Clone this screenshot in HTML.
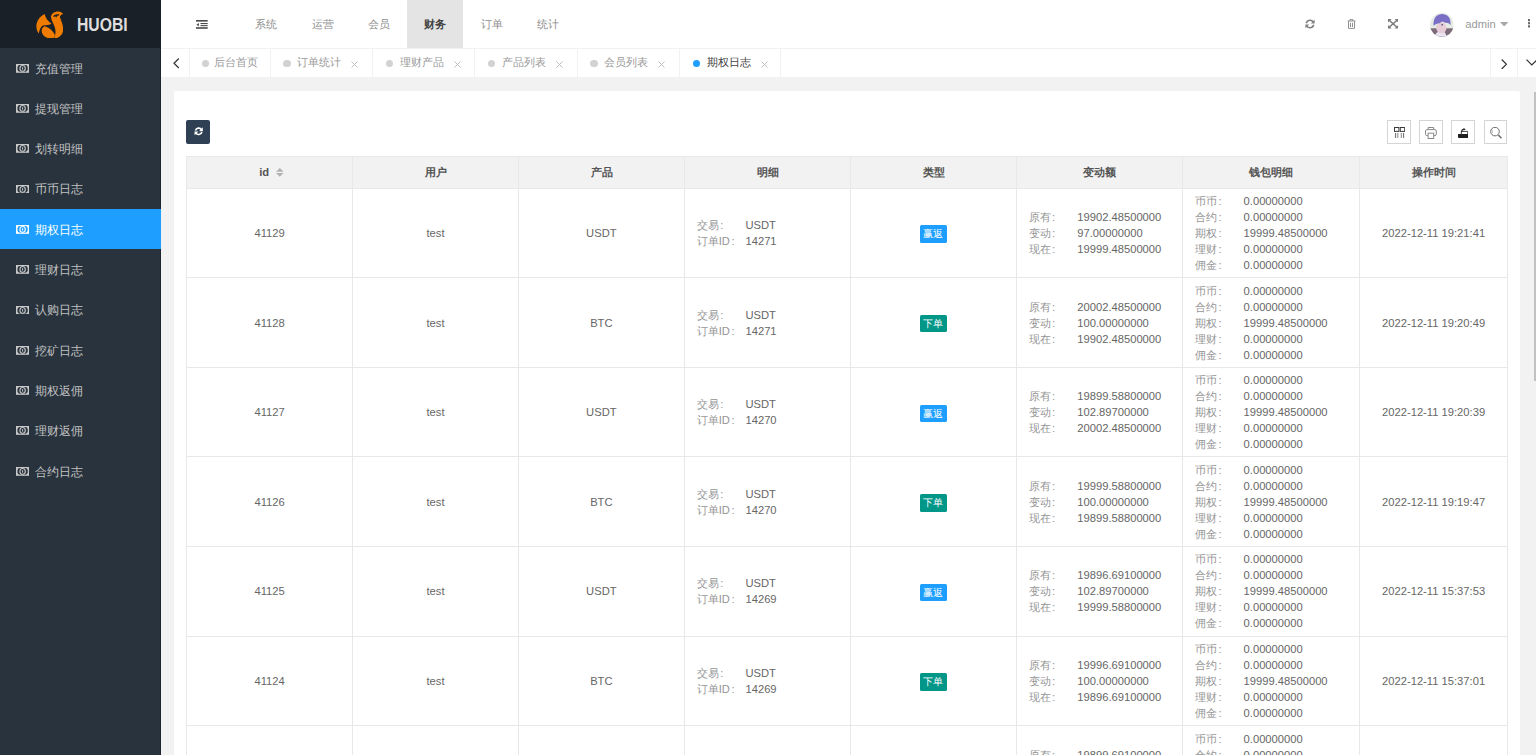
<!DOCTYPE html><html><head><meta charset="utf-8"><title>期权日志</title><style>
*{box-sizing:border-box;margin:0;padding:0}
html,body{width:1536px;height:755px;overflow:hidden}
body{position:relative;background:#f2f2f2;font-family:"Liberation Sans",sans-serif;font-size:11.2px;color:#666}
.abs{position:absolute}
#side{position:absolute;left:0;top:0;width:160.8px;height:755px;background:#28333e;box-shadow:inset -1px 0 0 #1d2630}
#logo{position:absolute;left:0;top:0;width:160.8px;height:48px;background:#192027}
#logo .t{position:absolute;left:76.6px;top:14.6px;font-size:17.8px;line-height:20px;font-weight:bold;color:#dedede;transform:scaleX(0.885);transform-origin:0 0}
.mi{position:absolute;left:0;width:160.8px;height:40.3px;color:#c2c2c2;font-size:11.5px}
.mi.on{background:#1e9fff;color:#fff}
.mi .ic{position:absolute;left:15.5px;top:15.8px;width:13.2px;height:8.8px}
.mi .tx{position:absolute;left:35.3px;top:12.6px;line-height:16px;white-space:nowrap}
#header{position:absolute;left:160.8px;top:0;width:1375.2px;height:48px;background:#fff}
.nv{position:absolute;top:0;height:48px;line-height:48px;width:56.3px;text-align:center;color:#8e8e8e;font-size:11.2px}
.nv.on{background:#e4e4e4;color:#444;font-weight:bold}
#tabs{position:absolute;left:160.8px;top:48px;width:1375.2px;height:29px;background:#fff;border-top:1px solid #f2f2f2}
.tb{position:absolute;top:0;height:28px;border-right:1px solid #f2f2f2;color:#999;white-space:nowrap}
.tb .dot{position:absolute;top:10.6px;width:7.4px;height:7.4px;border-radius:50%;background:#d2d2d2}
.tb .tx{position:absolute;top:5.3px;line-height:16px}
.tb .x{position:absolute;top:11.8px}
#card{position:absolute;left:173.7px;top:90.9px;width:1346.3px;height:700px;background:#fff;border-radius:2px}
#tbl{position:absolute;left:0;top:0}
.hline{position:absolute;height:1px;background:#e8e8e8}
.vline{position:absolute;width:1px;background:#e8e8e8}
.th{position:absolute;top:156px;text-indent:1px;height:32.6px;line-height:32.6px;text-align:center;font-weight:bold;color:#555}
.cc{position:absolute;text-align:center;color:#666}
.kv{position:absolute;line-height:16px;color:#666;white-space:nowrap}
.kv .k{display:inline-block;width:48.8px;color:#959595}
.co{font-style:normal;margin-left:1.6px}
.badge{position:absolute;height:17.5px;line-height:17.5px;padding:0 3.6px;font-size:9.6px;color:#fff;border-radius:1.6px}
.tool{position:absolute;top:120.2px;width:23.8px;height:23.4px;border:1px solid #d4d4d4}
</style></head><body>
<div id="side"><div id="logo"><svg class="abs" style="left:35.7px;top:10.8px" width="27.2" height="27.6" viewBox="120 100 570 580"><g fill="#ef7b00">
<path d="M300 165 C318 235 362 318 445 368 C410 392 330 398 265 405 C225 425 195 480 178 575 C135 520 118 440 132 370 C150 280 215 210 300 165Z"/>
<path d="M302 418 C390 440 472 512 512 592 C530 652 482 688 405 676 C315 665 245 605 238 525 C235 470 260 432 302 418Z"/>
<path d="M432 222 C440 150 515 105 590 110 C640 115 668 140 690 163 C655 172 628 192 622 228 C640 290 690 380 690 480 C698 580 630 660 490 690 C525 630 540 540 520 460 C500 380 440 310 432 222Z"/>
</g><path d="M478 208 C510 180 560 166 610 172 C600 185 592 195 588 205 L568 196 L548 238 L522 212 L500 226 Z" fill="#192027"/></svg><div class="t">HUOBI</div></div>
<div class="mi" style="top:48.00px"><svg class="ic" viewBox="0 0 13.2 8.8"><rect x="0" y="0" width="13.2" height="8.8" fill="#c8c8c8"/><rect x="1.5" y="1.1" width="10.2" height="6.6" rx="2.4" fill="#28333e"/><ellipse cx="6.6" cy="4.4" rx="2.7" ry="2.9" fill="none" stroke="#c8c8c8" stroke-width="1.1"/><rect x="6.1" y="3.2" width="1" height="2.4" fill="#c8c8c8"/></svg><span class="tx">充值管理</span></div>
<div class="mi" style="top:88.30px"><svg class="ic" viewBox="0 0 13.2 8.8"><rect x="0" y="0" width="13.2" height="8.8" fill="#c8c8c8"/><rect x="1.5" y="1.1" width="10.2" height="6.6" rx="2.4" fill="#28333e"/><ellipse cx="6.6" cy="4.4" rx="2.7" ry="2.9" fill="none" stroke="#c8c8c8" stroke-width="1.1"/><rect x="6.1" y="3.2" width="1" height="2.4" fill="#c8c8c8"/></svg><span class="tx">提现管理</span></div>
<div class="mi" style="top:128.60px"><svg class="ic" viewBox="0 0 13.2 8.8"><rect x="0" y="0" width="13.2" height="8.8" fill="#c8c8c8"/><rect x="1.5" y="1.1" width="10.2" height="6.6" rx="2.4" fill="#28333e"/><ellipse cx="6.6" cy="4.4" rx="2.7" ry="2.9" fill="none" stroke="#c8c8c8" stroke-width="1.1"/><rect x="6.1" y="3.2" width="1" height="2.4" fill="#c8c8c8"/></svg><span class="tx">划转明细</span></div>
<div class="mi" style="top:168.90px"><svg class="ic" viewBox="0 0 13.2 8.8"><rect x="0" y="0" width="13.2" height="8.8" fill="#c8c8c8"/><rect x="1.5" y="1.1" width="10.2" height="6.6" rx="2.4" fill="#28333e"/><ellipse cx="6.6" cy="4.4" rx="2.7" ry="2.9" fill="none" stroke="#c8c8c8" stroke-width="1.1"/><rect x="6.1" y="3.2" width="1" height="2.4" fill="#c8c8c8"/></svg><span class="tx">币币日志</span></div>
<div class="mi on" style="top:209.20px"><svg class="ic" viewBox="0 0 13.2 8.8"><rect x="0" y="0" width="13.2" height="8.8" fill="#fff"/><rect x="1.5" y="1.1" width="10.2" height="6.6" rx="2.4" fill="#1e9fff"/><ellipse cx="6.6" cy="4.4" rx="2.7" ry="2.9" fill="none" stroke="#fff" stroke-width="1.1"/><rect x="6.1" y="3.2" width="1" height="2.4" fill="#fff"/></svg><span class="tx">期权日志</span></div>
<div class="mi" style="top:249.50px"><svg class="ic" viewBox="0 0 13.2 8.8"><rect x="0" y="0" width="13.2" height="8.8" fill="#c8c8c8"/><rect x="1.5" y="1.1" width="10.2" height="6.6" rx="2.4" fill="#28333e"/><ellipse cx="6.6" cy="4.4" rx="2.7" ry="2.9" fill="none" stroke="#c8c8c8" stroke-width="1.1"/><rect x="6.1" y="3.2" width="1" height="2.4" fill="#c8c8c8"/></svg><span class="tx">理财日志</span></div>
<div class="mi" style="top:289.80px"><svg class="ic" viewBox="0 0 13.2 8.8"><rect x="0" y="0" width="13.2" height="8.8" fill="#c8c8c8"/><rect x="1.5" y="1.1" width="10.2" height="6.6" rx="2.4" fill="#28333e"/><ellipse cx="6.6" cy="4.4" rx="2.7" ry="2.9" fill="none" stroke="#c8c8c8" stroke-width="1.1"/><rect x="6.1" y="3.2" width="1" height="2.4" fill="#c8c8c8"/></svg><span class="tx">认购日志</span></div>
<div class="mi" style="top:330.10px"><svg class="ic" viewBox="0 0 13.2 8.8"><rect x="0" y="0" width="13.2" height="8.8" fill="#c8c8c8"/><rect x="1.5" y="1.1" width="10.2" height="6.6" rx="2.4" fill="#28333e"/><ellipse cx="6.6" cy="4.4" rx="2.7" ry="2.9" fill="none" stroke="#c8c8c8" stroke-width="1.1"/><rect x="6.1" y="3.2" width="1" height="2.4" fill="#c8c8c8"/></svg><span class="tx">挖矿日志</span></div>
<div class="mi" style="top:370.40px"><svg class="ic" viewBox="0 0 13.2 8.8"><rect x="0" y="0" width="13.2" height="8.8" fill="#c8c8c8"/><rect x="1.5" y="1.1" width="10.2" height="6.6" rx="2.4" fill="#28333e"/><ellipse cx="6.6" cy="4.4" rx="2.7" ry="2.9" fill="none" stroke="#c8c8c8" stroke-width="1.1"/><rect x="6.1" y="3.2" width="1" height="2.4" fill="#c8c8c8"/></svg><span class="tx">期权返佣</span></div>
<div class="mi" style="top:410.70px"><svg class="ic" viewBox="0 0 13.2 8.8"><rect x="0" y="0" width="13.2" height="8.8" fill="#c8c8c8"/><rect x="1.5" y="1.1" width="10.2" height="6.6" rx="2.4" fill="#28333e"/><ellipse cx="6.6" cy="4.4" rx="2.7" ry="2.9" fill="none" stroke="#c8c8c8" stroke-width="1.1"/><rect x="6.1" y="3.2" width="1" height="2.4" fill="#c8c8c8"/></svg><span class="tx">理财返佣</span></div>
<div class="mi" style="top:451.00px"><svg class="ic" viewBox="0 0 13.2 8.8"><rect x="0" y="0" width="13.2" height="8.8" fill="#c8c8c8"/><rect x="1.5" y="1.1" width="10.2" height="6.6" rx="2.4" fill="#28333e"/><ellipse cx="6.6" cy="4.4" rx="2.7" ry="2.9" fill="none" stroke="#c8c8c8" stroke-width="1.1"/><rect x="6.1" y="3.2" width="1" height="2.4" fill="#c8c8c8"/></svg><span class="tx">合约日志</span></div>
</div>
<div id="header">
<svg class="abs" style="left:35.4px;top:20px" width="11.7" height="8.8" viewBox="0 0 11.7 8.8"><g fill="#4a4a4a"><rect x="0" y="0" width="11.7" height="1.6"/><rect x="4.5" y="3" width="7.2" height="1.1"/><rect x="4.5" y="5.1" width="7.2" height="1.1"/><rect x="0" y="7.2" width="11.7" height="1.6"/><path d="M2.9 3 L0.4 4.65 L2.9 6.3Z"/></g></svg>
<div class="nv" style="left:77.50px">系统</div>
<div class="nv" style="left:133.80px">运营</div>
<div class="nv" style="left:190.10px">会员</div>
<div class="nv on" style="left:246.40px">财务</div>
<div class="nv" style="left:302.70px">订单</div>
<div class="nv" style="left:359.00px">统计</div>
<svg class="abs" style="left:1144.0px;top:19px" width="10" height="10" viewBox="0 0 10 10"><g fill="none" stroke="#808080" stroke-width="1.6"><path d="M1.3 4.2 A3.8 3.8 0 0 1 8.3 3.2"/><path d="M8.7 5.8 A3.8 3.8 0 0 1 1.7 6.8"/></g><g fill="#808080"><path d="M9.6 0.8 L9.6 4.6 L5.8 4.6Z"/><path d="M0.4 9.2 L0.4 5.4 L4.2 5.4Z"/></g></svg>
<svg class="abs" style="left:1186.1px;top:19px" width="9" height="10" viewBox="0 0 9 10"><g fill="none" stroke="#909090" stroke-width="1"><path d="M0.5 2 H8.5"/><path d="M3 2 V0.6 H6 V2"/><path d="M1.5 2.2 V9.4 H7.5 V2.2"/><path d="M3.5 3.8 V8"/><path d="M5.5 3.8 V8"/></g></svg>
<svg class="abs" style="left:1226.9px;top:19.3px" width="10.2" height="9.4" viewBox="0 0 10.2 9.4"><g fill="none" stroke="#7a7a7a" stroke-width="1.5"><path d="M1.2 1.2 L9 8.2"/><path d="M9 1.2 L1.2 8.2"/></g><g fill="#7a7a7a"><path d="M0 0 H3.6 L0 3.4Z"/><path d="M10.2 0 H6.6 L10.2 3.4Z"/><path d="M0 9.4 H3.6 L0 6Z"/><path d="M10.2 9.4 H6.6 L10.2 6Z"/></g></svg>
<svg class="abs" style="left:1269.1px;top:12.9px" width="23.7" height="23.7" viewBox="0 0 24 24"><defs><clipPath id="av"><circle cx="12" cy="12" r="12"/></clipPath></defs><g clip-path="url(#av)"><rect width="24" height="24" fill="#e6ece4"/><rect x="0" y="15.5" width="24" height="9" fill="#7d6b7a"/><path d="M4.5 24 C6 19.5 9 18.5 11 18.5 L15 19.5 C16 21 16.5 23 17 24Z" fill="#e9e6f2"/><ellipse cx="11.5" cy="15" rx="5.2" ry="5.6" fill="#e8ccd8"/><path d="M3.6 13 C2.8 4.5 7.5 1 12.2 1 C17.5 1 21.5 4.5 20.8 12.5 C19.5 10.5 17.5 9.8 15.5 10 L12.5 8.5 L9.5 10.5 C7.5 10.5 5.5 11.5 3.6 13Z" fill="#7b6ec6"/><ellipse cx="12.3" cy="11.8" rx="0.8" ry="0.9" fill="#4c4a86"/></g></svg>
<div class="abs" style="left:1304.4px;top:15.5px;line-height:16px;color:#999;font-size:11.2px">admin</div>
<svg class="abs" style="left:1339.6px;top:21.8px" width="8.4" height="4.6" viewBox="0 0 8.4 4.6"><path d="M0 0 H8.4 L4.2 4.6Z" fill="#a8a8a8"/></svg>
<svg class="abs" style="left:1367.2px;top:19.3px" width="2.4" height="8.5" viewBox="0 0 2.4 8.5"><g fill="#6a6a6a"><rect y="0" width="2.4" height="2.2"/><rect y="3.15" width="2.4" height="2.2"/><rect y="6.3" width="2.4" height="2.2"/></g></svg>
</div>
<div id="tabs">
<div class="abs" style="left:0;top:0;width:29.4px;height:28px;border-right:1px solid #f2f2f2"></div>
<svg class="abs" style="left:12.2px;top:9px" width="6.5" height="10.5" viewBox="0 0 6.5 10.5"><path d="M5.8 0.5 L1 5.25 L5.8 10" fill="none" stroke="#333" stroke-width="1.2"/></svg>
<div class="tb" style="left:29.40px;width:80.70px"><span class="dot" style="left:11.7px"></span><span class="tx" style="left:23.4px">后台首页</span></div>
<div class="tb" style="left:110.10px;width:102.40px"><span class="dot" style="left:12.5px;"></span><span class="tx" style="left:26.5px;">订单统计</span><svg class="x" style="left:80.6px" width="7" height="7" viewBox="0 0 7 7"><path d="M0.5 0.5 L6.5 6.5 M6.5 0.5 L0.5 6.5" stroke="#b8b8b8" stroke-width="0.9"/></svg></div>
<div class="tb" style="left:212.50px;width:102.20px"><span class="dot" style="left:12.5px;"></span><span class="tx" style="left:26.5px;">理财产品</span><svg class="x" style="left:80.6px" width="7" height="7" viewBox="0 0 7 7"><path d="M0.5 0.5 L6.5 6.5 M6.5 0.5 L0.5 6.5" stroke="#b8b8b8" stroke-width="0.9"/></svg></div>
<div class="tb" style="left:314.70px;width:102.30px"><span class="dot" style="left:12.5px;"></span><span class="tx" style="left:26.5px;">产品列表</span><svg class="x" style="left:80.6px" width="7" height="7" viewBox="0 0 7 7"><path d="M0.5 0.5 L6.5 6.5 M6.5 0.5 L0.5 6.5" stroke="#b8b8b8" stroke-width="0.9"/></svg></div>
<div class="tb" style="left:417.00px;width:102.50px"><span class="dot" style="left:12.5px;"></span><span class="tx" style="left:26.5px;">会员列表</span><svg class="x" style="left:80.6px" width="7" height="7" viewBox="0 0 7 7"><path d="M0.5 0.5 L6.5 6.5 M6.5 0.5 L0.5 6.5" stroke="#b8b8b8" stroke-width="0.9"/></svg></div>
<div class="tb" style="left:519.50px;width:101.00px"><span class="dot" style="left:12.5px;background:#1e9fff"></span><span class="tx" style="left:26.5px;color:#444">期权日志</span><svg class="x" style="left:80.6px" width="7" height="7" viewBox="0 0 7 7"><path d="M0.5 0.5 L6.5 6.5 M6.5 0.5 L0.5 6.5" stroke="#b8b8b8" stroke-width="0.9"/></svg></div>
<div class="abs" style="left:1328.8px;top:0;width:1px;height:28px;background:#f2f2f2"></div>
<div class="abs" style="left:1356.3px;top:0;width:1px;height:28px;background:#f2f2f2"></div>
<svg class="abs" style="left:1340.0px;top:9.5px" width="6.5" height="10.5" viewBox="0 0 6.5 10.5"><path d="M0.7 0.5 L5.5 5.25 L0.7 10" fill="none" stroke="#333" stroke-width="1.2"/></svg>
<svg class="abs" style="left:1365.7px;top:10.2px" width="12" height="7" viewBox="0 0 12 7"><path d="M0.5 0.7 L5.8 6 L11.1 0.7" fill="none" stroke="#333" stroke-width="1.2"/></svg>
</div>
<div id="card"></div>
<div class="abs" style="left:186px;top:120px;width:24px;height:24px;background:#2f3f54;border-radius:2px"></div>
<svg class="abs" style="left:193.6px;top:127.4px" width="9.4" height="8.6" viewBox="0 0 10 10"><g fill="none" stroke="#fff" stroke-width="1.9"><path d="M1.3 4.2 A3.8 3.8 0 0 1 8.3 3.2"/><path d="M8.7 5.8 A3.8 3.8 0 0 1 1.7 6.8"/></g><g fill="#fff"><path d="M9.8 0.4 L9.8 4.8 L5.4 4.8Z"/><path d="M0.2 9.6 L0.2 5.2 L4.6 5.2Z"/></g></svg>
<div class="tool" style="left:1387.3px"></div>
<div class="tool" style="left:1419.3px"></div>
<div class="tool" style="left:1451.4px"></div>
<div class="tool" style="left:1483.7px"></div>
<svg class="abs" style="left:1393.9px;top:127px" width="11.2" height="11" viewBox="0 0 11.2 11"><g fill="none" stroke="#3a3a3a" stroke-width="1"><rect x="0.5" y="0.5" width="4.4" height="3.9"/><rect x="6.3" y="0.5" width="4.4" height="3.9"/></g><g fill="#555"><rect x="1.2" y="6" width="0.9" height="5"/><rect x="3.4" y="6" width="0.9" height="5" fill="#777"/><rect x="6.8" y="6" width="0.9" height="5" fill="#777"/><rect x="9.2" y="6" width="0.9" height="5"/></g></svg>
<svg class="abs" style="left:1425.2px;top:127px" width="11.8" height="12" viewBox="0 0 11.8 12"><g fill="none" stroke="#8a8a8a" stroke-width="1"><path d="M3.1 2.6 V0.5 H8.7 V2.6"/><path d="M3 8.6 H1.8 C1 8.6 0.5 8 0.5 7.2 V4 C0.5 3.2 1 2.6 1.8 2.6 H10 C10.8 2.6 11.3 3.2 11.3 4 V7.2 C11.3 8 10.8 8.6 10 8.6 H8.8"/><rect x="3.1" y="6.2" width="5.6" height="5.3"/></g></svg>
<svg class="abs" style="left:1458.3px;top:127.7px" width="10.2" height="10.2" viewBox="0 0 10.2 10.2"><path d="M0 6 H10.2 V10.2 H1.2 C0.6 10.2 0 9.6 0 9Z" fill="#1f1f1f"/><path d="M3.3 6 V3.4 H9.7 V6" fill="none" stroke="#333" stroke-width="0.9"/><path d="M3.6 4.2 C3.6 2.2 4.4 1.3 6 1.3" fill="none" stroke="#222" stroke-width="1.1"/><path d="M5.6 0 L7.8 1.3 L5.6 2.6Z" fill="#222"/></svg>
<svg class="abs" style="left:1489.8px;top:126.8px" width="12.4" height="12.2" viewBox="0 0 12.4 12.2"><g fill="none" stroke="#6a6a6a"><circle cx="5" cy="4.6" r="4.3" stroke-width="1"/><path d="M8.4 8 L11.4 11.2" stroke-width="1.5"/><path d="M2.6 3.2 A2.7 2.7 0 0 0 2.6 6" stroke="#aaa" stroke-width="0.8"/></g></svg>
<div class="abs" style="left:186.5px;top:156.0px;width:1321.0px;height:32.6px;background:#f2f2f2"></div>
<div class="hline" style="left:186.5px;top:156.0px;width:1321.0px"></div>
<div class="hline" style="left:186.5px;top:187.6px;width:1321.0px"></div>
<div class="hline" style="left:186.5px;top:277.2px;width:1321.0px"></div>
<div class="hline" style="left:186.5px;top:366.8px;width:1321.0px"></div>
<div class="hline" style="left:186.5px;top:456.4px;width:1321.0px"></div>
<div class="hline" style="left:186.5px;top:546.0px;width:1321.0px"></div>
<div class="hline" style="left:186.5px;top:635.6px;width:1321.0px"></div>
<div class="hline" style="left:186.5px;top:725.2px;width:1321.0px"></div>
<div class="vline" style="left:186.0px;top:156.0px;height:604.0px"></div>
<div class="vline" style="left:352.1px;top:156.0px;height:604.0px"></div>
<div class="vline" style="left:517.9px;top:156.0px;height:604.0px"></div>
<div class="vline" style="left:683.8px;top:156.0px;height:604.0px"></div>
<div class="vline" style="left:849.8px;top:156.0px;height:604.0px"></div>
<div class="vline" style="left:1015.8px;top:156.0px;height:604.0px"></div>
<div class="vline" style="left:1181.5px;top:156.0px;height:604.0px"></div>
<div class="vline" style="left:1359.2px;top:156.0px;height:604.0px"></div>
<div class="vline" style="left:1507.0px;top:156.0px;height:604.0px"></div>
<div class="th" style="left:186.5px;width:166.1px;text-indent:4px">id<svg style="display:inline-block;vertical-align:middle;margin-left:7.2px;margin-top:-1px" width="7.6" height="8.8" viewBox="0 0 7.6 8.8"><path d="M0 3.8 L3.8 0 L7.6 3.8Z M0 5 L3.8 8.8 L7.6 5Z" fill="#b2b2b2"/></svg></div>
<div class="th" style="left:352.6px;width:165.8px;">用户</div>
<div class="th" style="left:518.4px;width:165.9px;">产品</div>
<div class="th" style="left:684.3px;width:166.0px;">明细</div>
<div class="th" style="left:850.3px;width:166.0px;">类型</div>
<div class="th" style="left:1016.3px;width:165.7px;">变动额</div>
<div class="th" style="left:1182.0px;width:177.7px;">钱包明细</div>
<div class="th" style="left:1359.7px;width:147.8px;">操作时间</div>
<div class="cc" style="left:186.5px;width:166.1px;top:224.9px;line-height:16px">41129</div>
<div class="cc" style="left:352.6px;width:165.8px;top:224.9px;line-height:16px">test</div>
<div class="cc" style="left:518.4px;width:165.9px;top:224.9px;line-height:16px">USDT</div>
<div class="cc" style="left:1359.7px;width:147.8px;top:224.9px;line-height:16px">2022-12-11 19:21:41</div>
<div class="kv" style="left:696.7px;top:216.9px"><span class="k">交易<i class="co">:</i></span>USDT<br><span class="k">订单ID<i class="co">:</i></span>14271</div>
<div class="badge" style="left:919.9px;top:225.3px;background:#1e9fff">赢返</div>
<div class="kv" style="left:1028.5px;top:208.9px"><span class="k">原有<i class="co">:</i></span>19902.48500000<br><span class="k">变动<i class="co">:</i></span>97.00000000<br><span class="k">现在<i class="co">:</i></span>19999.48500000</div>
<div class="kv" style="left:1194.8px;top:192.9px"><span class="k">币币<i class="co">:</i></span>0.00000000<br><span class="k">合约<i class="co">:</i></span>0.00000000<br><span class="k">期权<i class="co">:</i></span>19999.48500000<br><span class="k">理财<i class="co">:</i></span>0.00000000<br><span class="k">佣金<i class="co">:</i></span>0.00000000</div>
<div class="cc" style="left:186.5px;width:166.1px;top:314.5px;line-height:16px">41128</div>
<div class="cc" style="left:352.6px;width:165.8px;top:314.5px;line-height:16px">test</div>
<div class="cc" style="left:518.4px;width:165.9px;top:314.5px;line-height:16px">BTC</div>
<div class="cc" style="left:1359.7px;width:147.8px;top:314.5px;line-height:16px">2022-12-11 19:20:49</div>
<div class="kv" style="left:696.7px;top:306.5px"><span class="k">交易<i class="co">:</i></span>USDT<br><span class="k">订单ID<i class="co">:</i></span>14271</div>
<div class="badge" style="left:919.9px;top:314.9px;background:#009688">下单</div>
<div class="kv" style="left:1028.5px;top:298.5px"><span class="k">原有<i class="co">:</i></span>20002.48500000<br><span class="k">变动<i class="co">:</i></span>100.00000000<br><span class="k">现在<i class="co">:</i></span>19902.48500000</div>
<div class="kv" style="left:1194.8px;top:282.5px"><span class="k">币币<i class="co">:</i></span>0.00000000<br><span class="k">合约<i class="co">:</i></span>0.00000000<br><span class="k">期权<i class="co">:</i></span>19999.48500000<br><span class="k">理财<i class="co">:</i></span>0.00000000<br><span class="k">佣金<i class="co">:</i></span>0.00000000</div>
<div class="cc" style="left:186.5px;width:166.1px;top:404.1px;line-height:16px">41127</div>
<div class="cc" style="left:352.6px;width:165.8px;top:404.1px;line-height:16px">test</div>
<div class="cc" style="left:518.4px;width:165.9px;top:404.1px;line-height:16px">USDT</div>
<div class="cc" style="left:1359.7px;width:147.8px;top:404.1px;line-height:16px">2022-12-11 19:20:39</div>
<div class="kv" style="left:696.7px;top:396.1px"><span class="k">交易<i class="co">:</i></span>USDT<br><span class="k">订单ID<i class="co">:</i></span>14270</div>
<div class="badge" style="left:919.9px;top:404.5px;background:#1e9fff">赢返</div>
<div class="kv" style="left:1028.5px;top:388.1px"><span class="k">原有<i class="co">:</i></span>19899.58800000<br><span class="k">变动<i class="co">:</i></span>102.89700000<br><span class="k">现在<i class="co">:</i></span>20002.48500000</div>
<div class="kv" style="left:1194.8px;top:372.1px"><span class="k">币币<i class="co">:</i></span>0.00000000<br><span class="k">合约<i class="co">:</i></span>0.00000000<br><span class="k">期权<i class="co">:</i></span>19999.48500000<br><span class="k">理财<i class="co">:</i></span>0.00000000<br><span class="k">佣金<i class="co">:</i></span>0.00000000</div>
<div class="cc" style="left:186.5px;width:166.1px;top:493.7px;line-height:16px">41126</div>
<div class="cc" style="left:352.6px;width:165.8px;top:493.7px;line-height:16px">test</div>
<div class="cc" style="left:518.4px;width:165.9px;top:493.7px;line-height:16px">BTC</div>
<div class="cc" style="left:1359.7px;width:147.8px;top:493.7px;line-height:16px">2022-12-11 19:19:47</div>
<div class="kv" style="left:696.7px;top:485.7px"><span class="k">交易<i class="co">:</i></span>USDT<br><span class="k">订单ID<i class="co">:</i></span>14270</div>
<div class="badge" style="left:919.9px;top:494.1px;background:#009688">下单</div>
<div class="kv" style="left:1028.5px;top:477.7px"><span class="k">原有<i class="co">:</i></span>19999.58800000<br><span class="k">变动<i class="co">:</i></span>100.00000000<br><span class="k">现在<i class="co">:</i></span>19899.58800000</div>
<div class="kv" style="left:1194.8px;top:461.7px"><span class="k">币币<i class="co">:</i></span>0.00000000<br><span class="k">合约<i class="co">:</i></span>0.00000000<br><span class="k">期权<i class="co">:</i></span>19999.48500000<br><span class="k">理财<i class="co">:</i></span>0.00000000<br><span class="k">佣金<i class="co">:</i></span>0.00000000</div>
<div class="cc" style="left:186.5px;width:166.1px;top:583.3px;line-height:16px">41125</div>
<div class="cc" style="left:352.6px;width:165.8px;top:583.3px;line-height:16px">test</div>
<div class="cc" style="left:518.4px;width:165.9px;top:583.3px;line-height:16px">USDT</div>
<div class="cc" style="left:1359.7px;width:147.8px;top:583.3px;line-height:16px">2022-12-11 15:37:53</div>
<div class="kv" style="left:696.7px;top:575.3px"><span class="k">交易<i class="co">:</i></span>USDT<br><span class="k">订单ID<i class="co">:</i></span>14269</div>
<div class="badge" style="left:919.9px;top:583.7px;background:#1e9fff">赢返</div>
<div class="kv" style="left:1028.5px;top:567.3px"><span class="k">原有<i class="co">:</i></span>19896.69100000<br><span class="k">变动<i class="co">:</i></span>102.89700000<br><span class="k">现在<i class="co">:</i></span>19999.58800000</div>
<div class="kv" style="left:1194.8px;top:551.3px"><span class="k">币币<i class="co">:</i></span>0.00000000<br><span class="k">合约<i class="co">:</i></span>0.00000000<br><span class="k">期权<i class="co">:</i></span>19999.48500000<br><span class="k">理财<i class="co">:</i></span>0.00000000<br><span class="k">佣金<i class="co">:</i></span>0.00000000</div>
<div class="cc" style="left:186.5px;width:166.1px;top:672.9px;line-height:16px">41124</div>
<div class="cc" style="left:352.6px;width:165.8px;top:672.9px;line-height:16px">test</div>
<div class="cc" style="left:518.4px;width:165.9px;top:672.9px;line-height:16px">BTC</div>
<div class="cc" style="left:1359.7px;width:147.8px;top:672.9px;line-height:16px">2022-12-11 15:37:01</div>
<div class="kv" style="left:696.7px;top:664.9px"><span class="k">交易<i class="co">:</i></span>USDT<br><span class="k">订单ID<i class="co">:</i></span>14269</div>
<div class="badge" style="left:919.9px;top:673.3px;background:#009688">下单</div>
<div class="kv" style="left:1028.5px;top:656.9px"><span class="k">原有<i class="co">:</i></span>19996.69100000<br><span class="k">变动<i class="co">:</i></span>100.00000000<br><span class="k">现在<i class="co">:</i></span>19896.69100000</div>
<div class="kv" style="left:1194.8px;top:640.9px"><span class="k">币币<i class="co">:</i></span>0.00000000<br><span class="k">合约<i class="co">:</i></span>0.00000000<br><span class="k">期权<i class="co">:</i></span>19999.48500000<br><span class="k">理财<i class="co">:</i></span>0.00000000<br><span class="k">佣金<i class="co">:</i></span>0.00000000</div>
<div class="cc" style="left:186.5px;width:166.1px;top:762.5px;line-height:16px">41123</div>
<div class="cc" style="left:352.6px;width:165.8px;top:762.5px;line-height:16px">test</div>
<div class="cc" style="left:518.4px;width:165.9px;top:762.5px;line-height:16px">USDT</div>
<div class="cc" style="left:1359.7px;width:147.8px;top:762.5px;line-height:16px">2022-12-11 15:36:41</div>
<div class="kv" style="left:696.7px;top:754.5px"><span class="k">交易<i class="co">:</i></span>USDT<br><span class="k">订单ID<i class="co">:</i></span>14268</div>
<div class="badge" style="left:919.9px;top:762.9px;background:#1e9fff">赢返</div>
<div class="kv" style="left:1028.5px;top:746.5px"><span class="k">原有<i class="co">:</i></span>19899.69100000<br><span class="k">变动<i class="co">:</i></span>100.00000000<br><span class="k">现在<i class="co">:</i></span>19996.69100000</div>
<div class="kv" style="left:1194.8px;top:730.5px"><span class="k">币币<i class="co">:</i></span>0.00000000<br><span class="k">合约<i class="co">:</i></span>0.00000000<br><span class="k">期权<i class="co">:</i></span>19999.48500000<br><span class="k">理财<i class="co">:</i></span>0.00000000<br><span class="k">佣金<i class="co">:</i></span>0.00000000</div>
<div class="abs" style="left:1533.8px;top:92px;width:3px;height:289px;background:#c1c1c1"></div>
</body></html>
